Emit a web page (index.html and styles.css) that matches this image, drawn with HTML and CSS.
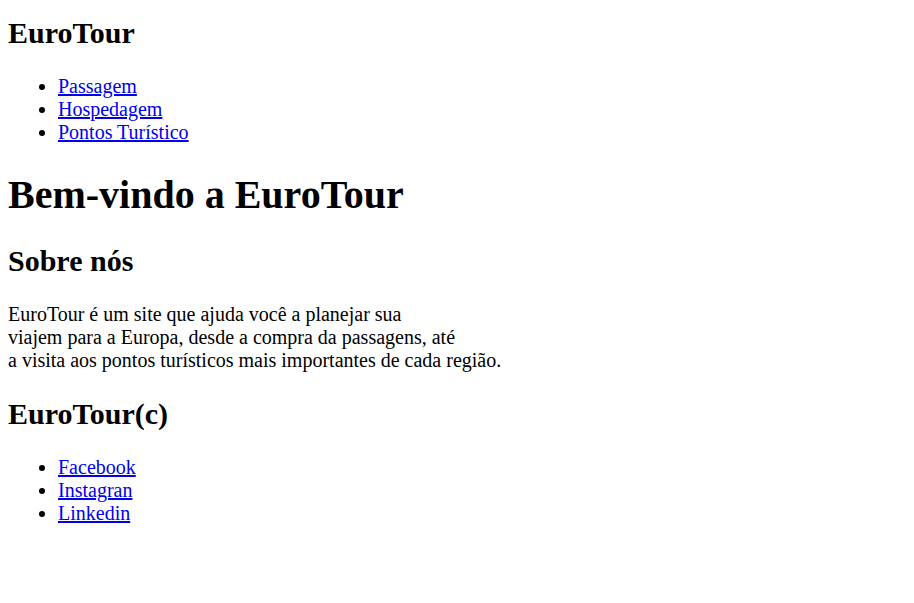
FILE: index.html
```html
<!DOCTYPE html>
<html lang="pt-BR">
<head>
<meta charset="utf-8">
<title>EuroTour</title>
<link rel="stylesheet" href="styles.css">
</head>
<body>
<header class="site-header">
  <h2 class="logo">EuroTour</h2>
  <nav>
    <ul class="menu">
      <li><a href="#">Passagem</a></li>
      <li><a href="#">Hospedagem</a></li>
      <li><a href="#">Pontos Turístico</a></li>
    </ul>
  </nav>
</header>
<main>
  <h1 class="title">Bem-vindo a EuroTour</h1>
  <h2 class="section-title">Sobre nós</h2>
  <p class="about">EuroTour é um site que ajuda você a planejar sua<br>viajem para a Europa, desde a compra da passagens, até<br>a visita aos pontos turísticos mais importantes de cada região.</p>
</main>
<footer class="site-footer">
  <h2 class="section-title">EuroTour(c)</h2>
  <ul class="menu">
    <li><a href="#">Facebook</a></li>
    <li><a href="#">Instagran</a></li>
    <li><a href="#">Linkedin</a></li>
  </ul>
</footer>
</body>
</html>
```
FILE: styles.css
```css
html {
  background: #ffffff;
}

body {
  margin: 8px;
  font-family: "Liberation Serif", "Times New Roman", serif;
  font-size: 20px;
  color: #000000;
}

h1 {
  font-size: 2em;
  margin: 0.67em 0;
}

h2 {
  font-size: 1.5em;
  margin: 0.83em 0;
}

.logo {
  margin-top: 8px;
}

p {
  margin: 1em 0;
}

.menu {
  margin: 1em 0;
  padding-left: 50px;
}

a {
  color: #0000ee;
  text-decoration: underline;
}
```
